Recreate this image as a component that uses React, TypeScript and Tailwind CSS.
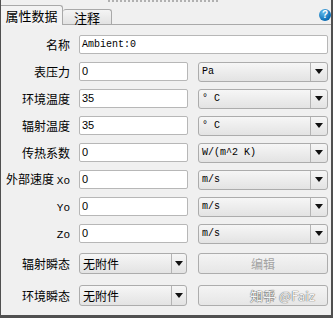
import React from 'react';

const CJK = "font-['Noto_Sans_CJK_SC','Noto_Sans',sans-serif]";

const Arrow: React.FC = () => (
  <svg width="8" height="5" viewBox="0 0 8 5">
    <polygon points="0,0 8,0 4,5" fill="#111" />
  </svg>
);

const Label: React.FC<{ children: React.ReactNode }> = ({ children }) => (
  <div className={`w-[69px] shrink-0 whitespace-nowrap text-right text-[12px] leading-none text-black ${CJK}`}>
    {children}
  </div>
);

const Field: React.FC<{ value: string; mono?: boolean; className?: string }> = ({ value, mono, className }) => (
  <div
    className={`flex h-[19px] items-center rounded-[2px] border border-[#b7b7b7] bg-white pl-[2px] text-black ${
      mono ? "font-['Liberation_Mono',monospace] text-[10px]" : "font-['Liberation_Sans',Arial,sans-serif] text-[11px]"
    } ${className ?? ''}`}
  >
    {value}
  </div>
);

const Combo: React.FC<{ value: string; cjk?: boolean; className?: string; arrowClass?: string }> = ({
  value,
  cjk,
  className,
  arrowClass,
}) => (
  <div
    className={`flex items-stretch rounded-[3px] border border-[#acacac] bg-gradient-to-b from-[#f6f6f6] to-[#e3e3e3] ${className ?? ''}`}
  >
    <div
      className={`flex flex-1 items-center pl-[3px] text-black ${
        cjk ? `${CJK} text-[12px]` : "font-['Liberation_Mono',monospace] text-[10px]"
      }`}
    >
      {value}
    </div>
    <div className={`flex items-center justify-center border-l border-[#b4b4b4] ${arrowClass ?? ''}`}>
      <Arrow />
    </div>
  </div>
);

const rows: { label: React.ReactNode; value: string; unit: string }[] = [
  { label: '表压力', value: '0', unit: 'Pa' },
  { label: '环境温度', value: '35', unit: '° C' },
  { label: '辐射温度', value: '35', unit: '° C' },
  { label: '传热系数', value: '0', unit: 'W/(m^2 K)' },
  {
    label: (
      <>
        外部速度 <span className="font-['Liberation_Mono',monospace] text-[11px]">Xo</span>
      </>
    ),
    value: '0',
    unit: 'm/s',
  },
  { label: <span className="font-['Liberation_Mono',monospace] text-[11px]">Yo</span>, value: '0', unit: 'm/s' },
  { label: <span className="font-['Liberation_Mono',monospace] text-[11px]">Zo</span>, value: '0', unit: 'm/s' },
];

export default function App() {
  return (
    <div className="flex h-[318px] w-[333px] flex-col overflow-hidden border-b-[3px] border-l border-r-2 border-[#505050] bg-[#f0f0f0]">
      {/* tab header */}
      <div className="flex h-[25px] shrink-0 flex-col border-b border-[#a9a9a9]">
        <div className="ml-[107px] h-[2px] w-[110px] border-t-2 border-dotted border-[#b0b0b0]" />
        <div className="flex flex-1 items-end">
          <div
            className={`-mb-px flex h-[20px] w-[62px] items-center justify-center rounded-tr-[3px] border-r border-t border-[#a9a9a9] bg-[#f3f3f3] pb-[1px] text-[13px] leading-none text-black ${CJK}`}
          >
            属性数据
          </div>
          <div
            className={`flex h-[15px] w-[49px] items-center justify-center rounded-t-[3px] border-r border-t border-[#a9a9a9] bg-gradient-to-b from-[#f4f4f4] to-[#e2e2e2] text-[13px] leading-none text-black ${CJK}`}
          >
            注释
          </div>
          <div className="mb-[3px] ml-auto flex h-[12px] w-[12px] items-center justify-center rounded-full bg-[radial-gradient(circle_at_35%_30%,#5fb8ea,#0b6db5_70%,#0a5a96)] font-['Liberation_Sans',Arial,sans-serif] text-[10px] font-bold leading-none text-white">
            ?
          </div>
        </div>
      </div>

      {/* panel */}
      <div className="flex flex-col pr-[3px] pt-[10px]">
        <div className="flex flex-col gap-[8px]">
          <div className="flex h-[19px] items-center gap-[9px]">
            <Label>名称</Label>
            <Field value="Ambient:0" mono className="flex-1" />
          </div>
          {rows.map((r, i) => (
            <div key={i} className="flex h-[19px] items-center gap-[9px]">
              <Label>{r.label}</Label>
              <Field value={r.value} className="w-[109px]" />
              <Combo value={r.unit} className="ml-[1px] h-[20px] w-[130px]" arrowClass="w-[17px]" />
            </div>
          ))}
        </div>

        <div className="mt-[10px] flex flex-col gap-[11px]">
          {['辐射瞬态', '环境瞬态'].map((l, i) => (
            <div key={l} className="flex h-[21px] items-center gap-[9px]">
              <Label>{l}</Label>
              <Combo value="无附件" cjk className="h-[21px] w-[108px]" arrowClass="w-[15px]" />
              <button
                className={`relative ml-auto flex h-[21px] w-[130px] items-center justify-center rounded-[3px] border border-[#adadad] bg-gradient-to-b from-[#f4f4f4] to-[#e6e6e6] text-[12px] leading-none text-[#a3a3a3] ${CJK}`}
              >
                编辑
                {i === 1 && (
                  <span className="absolute left-[51px] top-[3px] whitespace-nowrap text-[13px] leading-none text-[#f4f4f4] [text-shadow:0_0_1px_#555,0_0_1px_#777]">
                    知乎 @Faiz
                  </span>
                )}
              </button>
            </div>
          ))}
        </div>
      </div>
    </div>
  );
}
